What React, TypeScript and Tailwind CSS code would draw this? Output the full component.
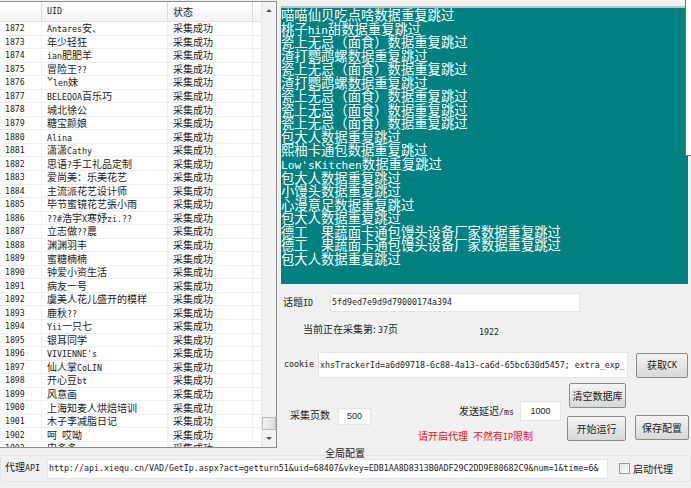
import React from "react";

const names = ["Antares安、","年少轻狂","ian肥肥羊","冒险王??","ˇlen妹","BELEQOA百乐巧","城北徐公","糖宝颜娘","Alina","潇潇Cathy","思语?手工礼品定制","爱尚美：乐美花艺","主流派花艺设计师","毕节蜜镜花艺張小雨","??#浩宇X寒妤zi.??","立志做??農","渊渊羽丰","蜜糖楠楠","钟爱小资生活","病友一号","虞美人花儿盛开的模样","鹿秋??","Yii一只七","银耳同学","VIVIENNE's","仙人掌CoLIN","开心豆bt","风意画","上海知麦人烘焙培训","木子李减脂日记","呵 哎呦","申多多"];

const S = "采集成功";
const dup = "数据重复跳过";
const lines = ["喵喵仙贝吃点啥","桃子hin甜","瓷上无忌（面食）","渣打鹦鹉螺","瓷上无忌（面食）","渣打鹦鹉螺","瓷上无忌（面食）","瓷上无忌（面食）","瓷上无忌（面食）","包大人","熙柚卡通包","Low'sKitchen","包大人","小馒头","心漫意足","包大人","德工　果蔬面卡通包馒头设备厂家","德工　果蔬面卡通包馒头设备厂家","包大人"];

function Mix({ text, big }: { text: string; big?: boolean }) {
  const parts = text.split(/([\x20-\x7e]+)/).filter(Boolean);
  return (
    <>
      {parts.map((p, i) =>
        /^[\x20-\x7e]+$/.test(p) ? (
          <span key={i} className={big ? "font-['DejaVu_Sans_Mono'] text-[11.2px]" : "font-['DejaVu_Sans_Mono'] text-[8.3px]"}>{p}</span>
        ) : (
          <span key={i}>{p}</span>
        )
      )}
    </>
  );
}

function Btn({ children, className }: { children: React.ReactNode; className: string }) {
  return (
    <div className={"flex items-center justify-center rounded-[2px] border border-[#8a8a8a] bg-gradient-to-b from-[#f4f4f4] to-[#d8d8d8] text-[#222] " + className}>
      {children}
    </div>
  );
}

function Field({ children, className }: { children: React.ReactNode; className: string }) {
  return <div className={"flex items-center overflow-hidden whitespace-nowrap border border-[#e4e4e4] bg-white font-['DejaVu_Sans_Mono'] text-[8.3px] text-[#222] " + className}>{children}</div>;
}

export default function App() {
  return (
    <div className="relative flex h-[488px] w-[691px] flex-col overflow-hidden bg-[#f0f0f0] font-['Noto_Sans_CJK_SC',sans-serif] text-[10px] leading-none text-[#222]">
      <div className="flex h-[449px] shrink-0">
        <div className="mt-[1px] flex h-[447px] w-[277px] shrink-0 border-y border-r border-[#8f8f8f] bg-white">
          <div className="w-[261px] shrink-0 overflow-hidden">
            <div className="flex h-[20px] items-center border-b border-[#e2e2e2] bg-gradient-to-b from-white to-[#f2f4f6]">
              <div className="h-full w-[42px] border-r border-[#dcdcdc]" />
              <div className="flex h-full w-[126px] items-center border-r border-[#dcdcdc] pl-[5px] font-['DejaVu_Sans_Mono'] text-[8.3px]">UID</div>
              <div className="flex h-full w-[85px] items-center border-r border-[#dcdcdc] pl-[5px]">状态</div>
            </div>
            {names.map((n, i) => (
              <div key={i} className="flex h-[13.55px] items-center border-b border-[#eeeeee] whitespace-nowrap">
                <div className="flex h-full w-[42px] items-center border-r border-[#f0f0f0] pl-[5px] font-['DejaVu_Sans_Mono'] text-[8.2px]">{1872 + i}</div>
                <div className="flex h-full w-[126px] items-center border-r border-[#f0f0f0] pl-[5px]"><span><Mix text={n} /></span></div>
                <div className="flex h-full w-[85px] items-center border-r border-[#f0f0f0] pl-[5px]">{S}</div>
              </div>
            ))}
          </div>
          <div className="ml-auto flex w-[15px] flex-col border-l border-[#e8e8e8] bg-[#f2f2f2]">
            <div className="flex h-[17px] items-center justify-center">
              <div className="h-0 w-0 border-x-[3px] border-b-[3px] border-x-transparent border-b-[#555]" />
            </div>
            <div className="flex-1" />
            <div className="h-[13px] border border-[#bbbbbb] bg-gradient-to-r from-[#f4f4f4] to-[#dcdcdc]" />
            <div className="flex h-[17px] items-center justify-center">
              <div className="h-0 w-0 border-x-[3px] border-t-[3px] border-x-transparent border-t-[#555]" />
            </div>
          </div>
        </div>

        <div className="flex w-[414px] flex-col pl-[4px]">
          <div className="mt-[6px] h-[278px] w-[407px] overflow-hidden border-t-2 border-[#b8c4c8] bg-[#008080] text-[13.33px] leading-[13.55px] text-white">
            {lines.map((l, i) => (
              <div key={i} className="h-[13.55px] whitespace-pre"><Mix text={l + dup} big /></div>
            ))}
          </div>

          <div className="mt-[9px] flex h-[19px] items-center">
            <span className="ml-[2px] w-[47px]"><Mix text="话题ID" /></span>
            <Field className="h-[19px] w-[250px] pl-[1px]">5fd9ed7e9d9d79000174a394</Field>
          </div>

          <div className="mt-[11px] flex h-[14px] items-start">
            <span className="ml-[22px] mt-[1px] w-[176px]">当前正在采集第: <Mix text="37" />页</span>
            <span className="mt-[5px] font-['DejaVu_Sans_Mono'] text-[8.3px]">1922</span>
          </div>

          <div className="mt-[15px] flex h-[26px] items-center">
            <span className="ml-[3px] mb-[2px] w-[34px] font-['DejaVu_Sans_Mono'] text-[8.3px]">cookie</span>
            <Field className="h-[26px] w-[310px] pl-[1px]">xhsTrackerId=a6d09718-6c88-4a13-ca6d-65bc630d5457; extra_exp_</Field>
            <Btn className="ml-[8px] h-[25px] w-[52px]"><Mix text="获取CK" /></Btn>
          </div>

          <div className="mt-[5px] flex h-[58px]">
            <div className="flex w-[286px] shrink-0 flex-col">
              <div className="flex h-[45px] items-start">
                <span className="ml-[9px] mt-[27px] w-[48px]">采集页数</span>
                <Field className="mt-[25px] h-[17px] w-[33px] justify-center font-['Liberation_Sans'] text-[9px]">500</Field>
                <span className="ml-[88px] mt-[23px] w-[62px] whitespace-nowrap"><Mix text="发送延迟/ms" /></span>
                <Field className="ml-[-1px] mt-[18px] h-[20px] w-[41px] justify-center font-['Liberation_Sans'] text-[9px]">1000</Field>
              </div>
              <div className="ml-[137px] mt-[5px] whitespace-nowrap text-[#f01010]"><Mix text="请开启代理 不然有IP限制" /></div>
            </div>
            <div className="flex w-[59px] shrink-0 flex-col items-end">
              <Btn className="h-[25px] w-[57px]">清空数据库</Btn>
              <Btn className="mt-[8px] h-[25px] w-[59px]">开始运行</Btn>
            </div>
            <Btn className="ml-[9px] mt-[32px] h-[25px] w-[54px]">保存配置</Btn>
          </div>
        </div>
      </div>

      <div className="relative mt-[6px] flex h-[27px] items-center rounded-[2px] border border-[#e4e4e4] bg-[#f0f0f0]">
        <span className="absolute left-[324px] top-[-8px]">全局配置</span>
        <span className="ml-[4px] mb-[3px] w-[42px]"><Mix text="代理API" /></span>
        <Field className="h-[20px] w-[561px] pl-[1px]">http://api.xiequ.cn/VAD/GetIp.aspx?act=getturn51&amp;uid=68407&amp;vkey=EDB1AA8D8313B0ADF29C2DD9E80682C9&amp;num=1&amp;time=6&amp;</Field>
        <div className="ml-[11px] h-[11px] w-[11px] border border-[#9a9a9a] bg-gradient-to-br from-[#e4e4e4] to-white" />
        <span className="ml-[3px]">启动代理</span>
      </div>

      <div className="absolute right-0 top-0 h-[156px] w-[6px] border-b border-l border-[#777] bg-white" />
    </div>
  );
}
